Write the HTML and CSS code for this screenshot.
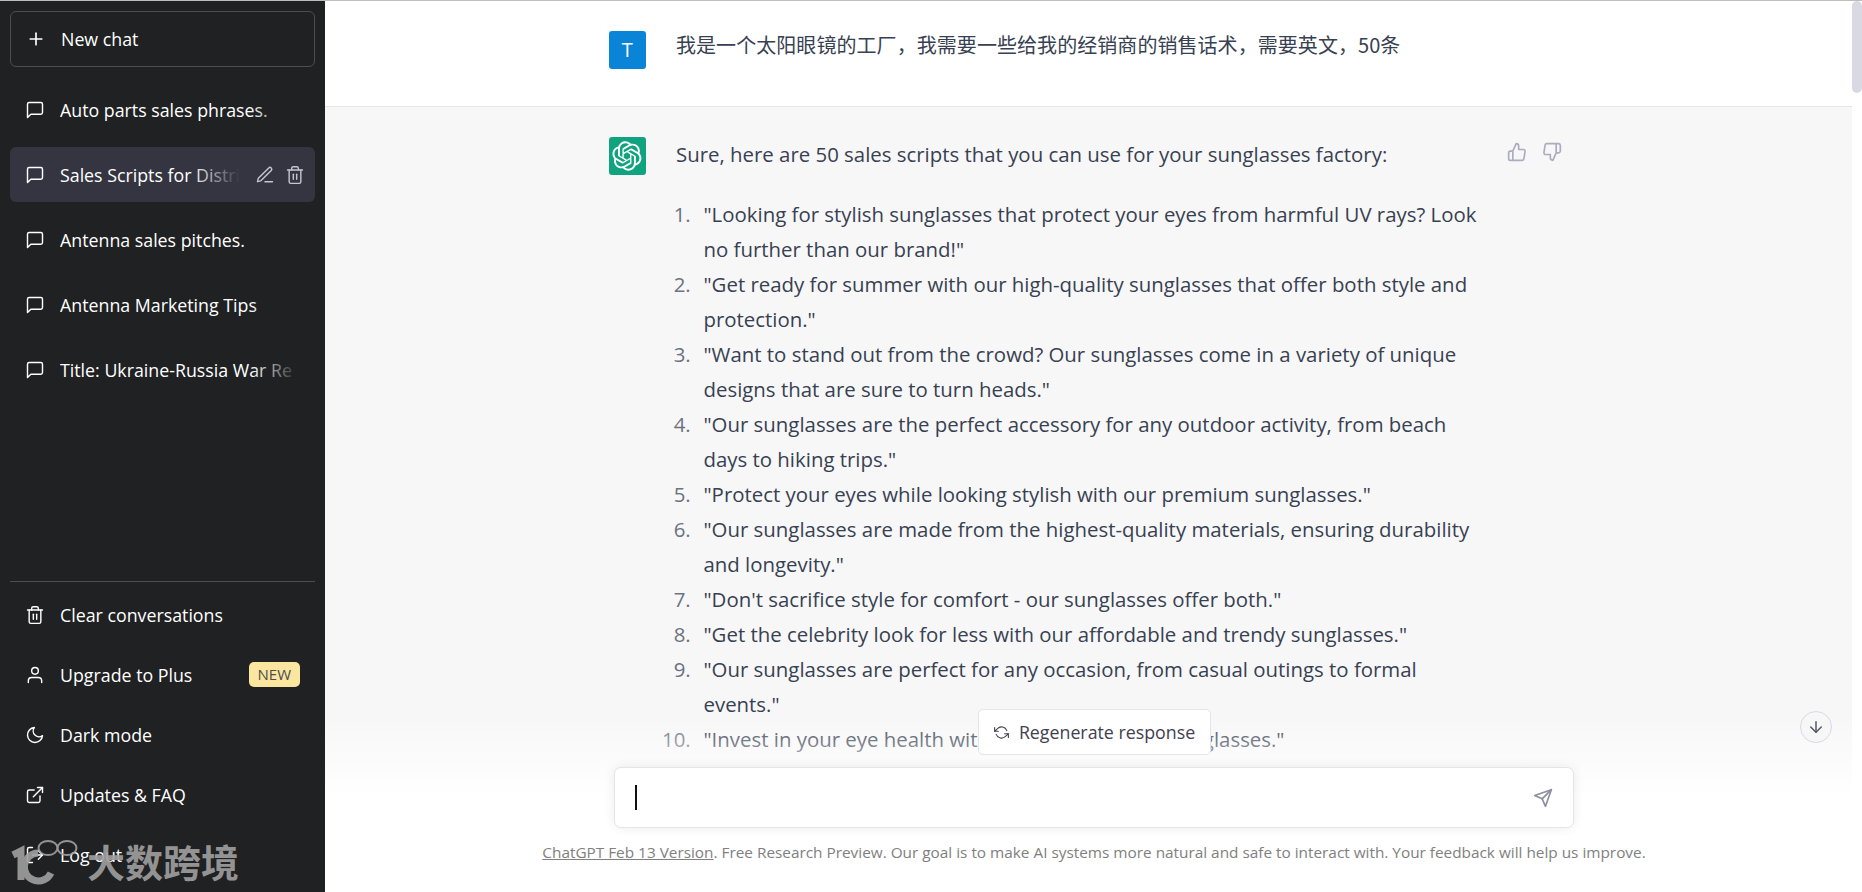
FILE: index.html
```html
<!DOCTYPE html>
<html lang="en">
<head>
    <meta charset="UTF-8">
    <meta name="viewport" content="width=device-width, initial-scale=1.0">
    <title>Sales Scripts for Distributors</title>
    <link rel="stylesheet" href="styles.css">
</head>
<body>
    <svg class="icon-defs" width="0" height="0">
        <symbol id="i-msg" viewBox="0 0 24 24"><path d="M21 15a2 2 0 0 1-2 2H7l-4 4V5a2 2 0 0 1 2-2h14a2 2 0 0 1 2 2z"/></symbol>
        <symbol id="i-trash" viewBox="0 0 24 24"><polyline points="3 6 5 6 21 6"/><path d="M19 6v14a2 2 0 0 1-2 2H7a2 2 0 0 1-2-2V6m3 0V4a2 2 0 0 1 2-2h4a2 2 0 0 1 2 2v2"/><line x1="10" y1="11" x2="10" y2="17"/><line x1="14" y1="11" x2="14" y2="17"/></symbol>
    </svg>

    <div class="app">
        <aside class="sidebar">
            <a class="new-chat">
                <svg class="icon" viewBox="0 0 24 24"><line x1="12" y1="5" x2="12" y2="19"/><line x1="5" y1="12" x2="19" y2="12"/></svg>
                New chat
            </a>
            <div class="history">
                <a class="side-item"><svg class="icon"><use href="#i-msg"/></svg><span class="title">Auto parts sales phrases.</span></a>
                <a class="side-item active">
                    <svg class="icon"><use href="#i-msg"/></svg>
                    <span class="title">Sales Scripts for Distri</span>
                    <span class="row-actions">
                        <svg class="icon" viewBox="0 0 24 24"><path d="M12 20h9"/><path d="M16.5 3.5a2.12 2.12 0 0 1 3 3L7 19l-4 1 1-4L16.5 3.5z"/></svg>
                        <svg class="icon"><use href="#i-trash"/></svg>
                    </span>
                </a>
                <a class="side-item"><svg class="icon"><use href="#i-msg"/></svg><span class="title">Antenna sales pitches.</span></a>
                <a class="side-item"><svg class="icon"><use href="#i-msg"/></svg><span class="title">Antenna Marketing Tips</span></a>
                <a class="side-item"><svg class="icon"><use href="#i-msg"/></svg><span class="title">Title: Ukraine-Russia War Re</span></a>
            </div>
            <div class="side-footer">
                <a class="side-item"><svg class="icon"><use href="#i-trash"/></svg>Clear conversations</a>
                <a class="side-item">
                    <svg class="icon" viewBox="0 0 24 24"><path d="M20 21v-2a4 4 0 0 0-4-4H8a4 4 0 0 0-4 4v2"/><circle cx="12" cy="7" r="4"/></svg>
                    Upgrade to Plus
                    <span class="badge">NEW</span>
                </a>
                <a class="side-item"><svg class="icon" viewBox="0 0 24 24"><path d="M21 12.79A9 9 0 1 1 11.21 3 7 7 0 0 0 21 12.79z"/></svg>Dark mode</a>
                <a class="side-item"><svg class="icon" viewBox="0 0 24 24"><path d="M18 13v6a2 2 0 0 1-2 2H5a2 2 0 0 1-2-2V8a2 2 0 0 1 2-2h6"/><polyline points="15 3 21 3 21 9"/><line x1="10" y1="14" x2="21" y2="3"/></svg>Updates &amp; FAQ</a>
                <a class="side-item"><svg class="icon" viewBox="0 0 24 24"><path d="M9 21H5a2 2 0 0 1-2-2V5a2 2 0 0 1 2-2h4"/><polyline points="16 17 21 12 16 7"/><line x1="21" y1="12" x2="9" y2="12"/></svg>Log out</a>
            </div>
            <div class="watermark">
                <svg class="wm-logo" viewBox="0 0 65 42">
                    <path class="wm-thick" d="M0 15 L8 11 V40"/>
                    <path class="wm-thick" d="M38 33 A14 14 0 1 1 25 13"/>
                    <ellipse class="wm-thin" cx="35" cy="8" rx="9.5" ry="7"/>
                    <ellipse class="wm-thin" cx="54" cy="8" rx="9.5" ry="7"/>
                </svg>
                <span class="wm-text">大数跨境</span>
            </div>
        </aside>

        <main class="main">
            <div class="thread">
                <section class="message user">
                    <div class="message-inner">
                        <div class="avatar avatar-user">T</div>
                        <div class="message-body cjk">我是一个太阳眼镜的工厂，我需要一些给我的经销商的销售话术，需要英文，50条</div>
                    </div>
                </section>
                <section class="message bot">
                    <div class="message-inner">
                        <div class="avatar avatar-bot">
                            <svg viewBox="0 0 41 41" fill="currentColor"><path d="M37.5324 16.8707C37.9808 15.5241 38.1363 14.0974 37.9886 12.6859C37.8409 11.2744 37.3934 9.91076 36.676 8.68622C35.6126 6.83404 33.9882 5.3676 32.0373 4.4985C30.0864 3.62941 27.9098 3.40259 25.8215 3.85078C24.8796 2.7893 23.7219 1.94125 22.4257 1.36341C21.1295 0.785575 19.7249 0.491269 18.3058 0.500197C16.1708 0.495044 14.0893 1.16803 12.3614 2.42214C10.6335 3.67624 9.34853 5.44666 8.6917 7.47815C7.30085 7.76286 5.98686 8.3414 4.8377 9.17505C3.68854 10.0087 2.73073 11.0782 2.02839 12.312C0.956464 14.1591 0.498905 16.2988 0.721698 18.4228C0.944492 20.5467 1.83612 22.5449 3.268 24.1293C2.81966 25.4759 2.66413 26.9026 2.81182 28.3141C2.95951 29.7256 3.40701 31.0892 4.12437 32.3138C5.18791 34.1659 6.8123 35.6322 8.76321 36.5013C10.7141 37.3704 12.8907 37.5973 14.9789 37.1492C15.9208 38.2107 17.0786 39.0587 18.3747 39.6366C19.6709 40.2144 21.0755 40.5087 22.4946 40.4998C24.6307 40.5054 26.7133 39.8321 28.4418 38.5772C30.1704 37.3223 31.4556 35.5506 32.1119 33.5179C33.5027 33.2332 34.8167 32.6547 35.9659 31.821C37.115 30.9874 38.0728 29.9178 38.7752 28.684C39.8458 26.8371 40.3023 24.6979 40.0789 22.5748C39.8556 20.4517 38.9639 18.4544 37.5324 16.8707ZM22.4978 37.8849C20.7443 37.8874 19.0459 37.2733 17.6994 36.1501C17.7601 36.117 17.8666 36.0586 17.936 36.0161L25.9004 31.4156C26.1003 31.3019 26.2663 31.137 26.3813 30.9378C26.4964 30.7386 26.5563 30.5124 26.5549 30.2825V19.0542L29.9213 20.998C29.9389 21.0068 29.9541 21.0198 29.9656 21.0359C29.977 21.052 29.9842 21.0707 29.9867 21.0902V30.3889C29.9842 32.375 29.1946 34.2791 27.7909 35.6841C26.3872 37.0892 24.4838 37.8806 22.4978 37.8849ZM6.39227 31.0064C5.51397 29.4888 5.19742 27.7107 5.49804 25.9832C5.55718 26.0187 5.66048 26.0818 5.73461 26.1244L13.699 30.7248C13.8975 30.8408 14.1233 30.902 14.3532 30.902C14.583 30.902 14.8088 30.8408 15.0073 30.7248L24.731 25.1103V28.9979C24.7321 29.0177 24.7283 29.0376 24.7199 29.0556C24.7115 29.0736 24.6988 29.0893 24.6829 29.1012L16.6317 33.7497C14.9096 34.7416 12.8643 35.0097 10.9447 34.4954C9.02506 33.9811 7.38785 32.7263 6.39227 31.0064ZM4.29707 13.6194C5.17156 12.0998 6.55279 10.9364 8.19885 10.3327C8.19885 10.4013 8.19491 10.5228 8.19491 10.6071V19.808C8.19351 20.0378 8.25334 20.2638 8.36823 20.4629C8.48312 20.6619 8.64893 20.8267 8.84863 20.9404L18.5723 26.5542L15.206 28.4979C15.1894 28.5089 15.1703 28.5155 15.1505 28.5173C15.1307 28.5191 15.1107 28.516 15.0924 28.5082L7.04046 23.8557C5.32135 22.8601 4.06716 21.2235 3.55289 19.3046C3.03862 17.3858 3.30624 15.3413 4.29707 13.6194ZM31.955 20.0556L22.2312 14.4411L25.5976 12.4981C25.6142 12.4872 25.6333 12.4805 25.6531 12.4787C25.6729 12.4769 25.6928 12.4801 25.7111 12.4879L33.7631 17.1364C34.9967 17.849 36.0017 18.8982 36.6606 20.1613C37.3194 21.4244 37.6047 22.849 37.4832 24.2684C37.3617 25.6878 36.8382 27.0432 35.9743 28.1759C35.1103 29.3086 33.9415 30.1717 32.6047 30.6641C32.6047 30.5947 32.6047 30.4733 32.6047 30.3889V21.188C32.6066 20.9586 32.5474 20.7328 32.4332 20.5338C32.319 20.3348 32.154 20.1698 31.955 20.0556ZM35.3055 15.0128C35.2464 14.9765 35.1431 14.9142 35.069 14.8717L27.1045 10.2712C26.906 10.1554 26.6803 10.0943 26.4504 10.0943C26.2206 10.0943 25.9948 10.1554 25.7963 10.2712L16.0726 15.8858V11.9982C16.0715 11.9783 16.0753 11.9585 16.0837 11.9405C16.0921 11.9225 16.1048 11.9068 16.1207 11.8949L24.1719 7.25025C25.4053 6.53903 26.8158 6.19376 28.2383 6.25482C29.6608 6.31589 31.0364 6.78077 32.2044 7.59508C33.3723 8.40939 34.2842 9.53945 34.8334 10.8531C35.3826 12.1667 35.5464 13.6095 35.3055 15.0128ZM14.2424 21.9419L10.8752 19.9981C10.8576 19.9893 10.8423 19.9763 10.8309 19.9602C10.8195 19.9441 10.8122 19.9254 10.8098 19.9058V10.6071C10.8107 9.18295 11.2173 7.78848 11.9819 6.58696C12.7466 5.38544 13.8377 4.42659 15.1275 3.82264C16.4173 3.21869 17.8524 2.99464 19.2649 3.1767C20.6775 3.35876 22.0089 3.93941 23.1034 4.85067C23.0427 4.88379 22.937 4.94215 22.8668 4.98473L14.9024 9.58517C14.7025 9.69878 14.5366 9.86356 14.4215 10.0626C14.3065 10.2616 14.2466 10.4877 14.2479 10.7175L14.2424 21.9419ZM16.071 17.9991L20.4018 15.4978L24.7325 17.9975V22.9985L20.4018 25.4983L16.071 22.9985V17.9991Z"/></svg>
                        </div>
                        <div class="message-body">
                            <p>Sure, here are 50 sales scripts that you can use for your sunglasses factory:</p>
                            <ol class="scripts">
                                <li>"Looking for stylish sunglasses that protect your eyes from harmful UV rays? Look no further than our brand!"</li>
                                <li>"Get ready for summer with our high-quality sunglasses that offer both style and protection."</li>
                                <li>"Want to stand out from the crowd? Our sunglasses come in a variety of unique designs that are sure to turn heads."</li>
                                <li>"Our sunglasses are the perfect accessory for any outdoor activity, from beach days to hiking trips."</li>
                                <li>"Protect your eyes while looking stylish with our premium sunglasses."</li>
                                <li>"Our sunglasses are made from the highest-quality materials, ensuring durability and longevity."</li>
                                <li>"Don't sacrifice style for comfort - our sunglasses offer both."</li>
                                <li>"Get the celebrity look for less with our affordable and trendy sunglasses."</li>
                                <li>"Our sunglasses are perfect for any occasion, from casual outings to formal events."</li>
                                <li>"Invest in your eye health with our UV-protective sunglasses."</li>
                            </ol>
                        </div>
                        <div class="feedback">
                            <svg class="icon" viewBox="0 0 24 24"><path d="M14 9V5a3 3 0 0 0-3-3l-4 9v11h11.28a2 2 0 0 0 2-1.7l1.38-9a2 2 0 0 0-2-2.3zM7 22H4a2 2 0 0 1-2-2v-7a2 2 0 0 1 2-2h3"/></svg>
                            <svg class="icon" viewBox="0 0 24 24"><path d="M10 15v4a3 3 0 0 0 3 3l4-9V2H5.72a2 2 0 0 0-2 1.7l-1.38 9a2 2 0 0 0 2 2.3zm7-13h2.67A2.31 2.31 0 0 1 22 4v7a2.31 2.31 0 0 1-2.33 2H17"/></svg>
                        </div>
                    </div>
                </section>
            </div>

            <div class="scrollbar"><div class="scroll-thumb"></div></div>

            <button class="scroll-down">
                <svg class="icon" viewBox="0 0 24 24"><line x1="12" y1="5" x2="12" y2="19"/><polyline points="19 12 12 19 5 12"/></svg>
            </button>

            <div class="composer">
                <button class="regenerate">
                    <svg class="icon" viewBox="0 0 24 24"><polyline points="1 4 1 10 7 10"/><polyline points="23 20 23 14 17 14"/><path d="M20.49 9A9 9 0 0 0 5.64 5.64L1 10m22 4l-4.64 4.36A9 9 0 0 1 3.51 15"/></svg>
                    Regenerate response
                </button>
                <div class="input-box">
                    <span class="caret"></span>
                    <svg class="icon send" viewBox="0 0 24 24"><line x1="22" y1="2" x2="11" y2="13"/><polygon points="22 2 15 22 11 13 2 9 22 2"/></svg>
                </div>
                <div class="disclaimer"><u>ChatGPT Feb 13 Version</u>. Free Research Preview. Our goal is to make AI systems more natural and safe to interact with. Your feedback will help us improve.</div>
            </div>
        </main>
    </div>
</body>
</html>
```

FILE: styles.css
```css
* {
    box-sizing: border-box;
}

html, body {
    margin: 0;
    height: 100%;
    overflow: hidden;
}

body {
    font-family: "Open Sans", "Noto Sans CJK SC", sans-serif;
    color: #374151;
}

.icon-defs {
    position: absolute;
}

.icon {
    width: 20px;
    height: 20px;
    flex: none;
    fill: none;
    stroke: currentColor;
    stroke-width: 2;
    stroke-linecap: round;
    stroke-linejoin: round;
}

symbol {
    overflow: visible;
}

.app {
    display: flex;
    height: 892px;
    border-top: 1px solid #bdbdbd;
}

/* sidebar */
.sidebar {
    position: relative;
    width: 325px;
    flex: none;
    display: flex;
    flex-direction: column;
    padding: 10px;
    background-color: #202123;
    color: #fff;
    font-size: 17.8px;
}

.new-chat {
    display: flex;
    align-items: center;
    gap: 15px;
    height: 56px;
    padding: 0 15px;
    margin-bottom: 15px;
    border: 1px solid #4d4d4f;
    border-radius: 6px;
}

.history {
    flex: 1;
    display: flex;
    flex-direction: column;
    gap: 10px;
}

.side-item {
    display: flex;
    align-items: center;
    gap: 15px;
    height: 55px;
    padding: 0 15px;
    border-radius: 6px;
    white-space: nowrap;
}

.side-item .icon {
    stroke-width: 1.7;
}

.side-item.active {
    background-color: #343541;
}

.title {
    position: relative;
    flex: 1;
    overflow: hidden;
}

.title::after {
    content: "";
    position: absolute;
    top: 0;
    right: 0;
    bottom: 0;
    width: 50px;
    background: linear-gradient(to left, #202123, rgba(32, 33, 35, 0));
}

.active .title {
    flex: none;
    width: 180px;
}

.active .title::after {
    background: linear-gradient(to left, #343541, rgba(52, 53, 65, 0));
}

.row-actions {
    display: flex;
    flex: none;
    gap: 10px;
    color: #c5c5d2;
}

.side-footer {
    display: flex;
    flex-direction: column;
    gap: 5px;
    padding-top: 5px;
    border-top: 1px solid #4d4d4f;
}

.badge {
    margin-left: auto;
    padding: 0 9px;
    height: 25px;
    line-height: 25px;
    border-radius: 5px;
    background-color: #fae69e;
    color: #4d4d4f;
    font-size: 15px;
}

.watermark {
    position: absolute;
    left: 13px;
    bottom: 10px;
    display: flex;
    align-items: flex-end;
    color: #a0a0a0;
    opacity: 0.9;
}

.wm-logo {
    width: 65px;
    height: 42px;
    overflow: visible;
    fill: none;
    stroke: currentColor;
}

.wm-thick {
    stroke-width: 7;
}

.wm-thin {
    stroke-width: 2;
}

.wm-text {
    margin-left: 9px;
    font-family: "Noto Sans CJK SC", sans-serif;
    font-size: 38px;
    font-weight: 700;
    line-height: 42px;
}

/* chat */
.main {
    position: relative;
    flex: 1;
    overflow: hidden;
    background-color: #fff;
    font-size: 20.4px;
    line-height: 35px;
}

.thread {
    height: 100%;
    margin-right: 10px;
}

.message-inner {
    position: relative;
    display: flex;
    gap: 30px;
    width: 960px;
    margin: 0 auto;
    padding-top: 30px;
}

.user {
    height: 106px;
    border-bottom: 1px solid #e5e5e5;
}

.bot {
    height: 100%;
    background-color: #f7f7f8;
}

.avatar {
    width: 37.5px;
    height: 37.5px;
    flex: none;
    display: flex;
    align-items: center;
    justify-content: center;
    border-radius: 3px;
    color: #fff;
}

.avatar-user {
    background-color: #0a84d6;
    font-size: 20px;
}

.avatar-bot {
    background-color: #10a37f;
}

.avatar-bot svg {
    width: 30px;
    height: 30px;
}

.message-body {
    width: 815px;
}

.cjk {
    font-family: "Noto Sans CJK SC", sans-serif;
    font-size: 20px;
    line-height: 28px;
    letter-spacing: 0.06px;
}

.message-body p {
    margin: 0 0 25px;
}

.scripts {
    margin: 0;
    padding-left: 20px;
}

.scripts li {
    padding-left: 7.5px;
}

.scripts li::marker {
    color: #6b7280;
}

.feedback {
    display: flex;
    gap: 15px;
    margin-left: -14px;
    padding-top: 5px;
    color: #acacbe;
}

/* overlays */
.scrollbar {
    position: absolute;
    top: 0;
    right: 0;
    bottom: 0;
    width: 10px;
    background-color: #fff;
}

.scroll-thumb {
    height: 92px;
    border-radius: 5px;
    background-color: #d9d9e3;
}

.scroll-down {
    position: absolute;
    right: 30px;
    bottom: 149px;
    z-index: 2;
    width: 32px;
    height: 32px;
    display: flex;
    align-items: center;
    justify-content: center;
    padding: 0;
    border: 1px solid #d9d9e3;
    border-radius: 50%;
    background-color: #f7f7f8;
    color: #565869;
}

.scroll-down .icon {
    width: 18px;
    height: 18px;
}

.composer {
    position: absolute;
    left: 0;
    right: 10px;
    bottom: 0;
    height: 176px;
    display: flex;
    flex-direction: column;
    align-items: center;
    background: linear-gradient(180deg, rgba(255, 255, 255, 0), #fff 45%);
}

.regenerate {
    display: flex;
    align-items: center;
    gap: 10px;
    height: 46px;
    padding: 0 15px;
    margin-top: -7px;
    margin-left: 12px;
    border: 1px solid #e5e5e5;
    border-radius: 5px;
    background-color: #fff;
    color: #40414f;
    font: inherit;
    font-size: 17.8px;
    line-height: 25px;
}

.regenerate .icon {
    width: 15px;
    height: 15px;
    stroke-width: 1.7;
}

.input-box {
    display: flex;
    align-items: center;
    justify-content: space-between;
    width: 960px;
    height: 61px;
    margin-top: 12px;
    margin-left: 11px;
    padding: 0 20px;
    border: 1px solid #e5e5e5;
    border-radius: 7px;
    background-color: #fff;
    box-shadow: 0 0 12px rgba(0, 0, 0, 0.08);
}

.caret {
    width: 2px;
    height: 25px;
    background-color: #111;
}

.send {
    color: #8e8ea0;
}

.disclaimer {
    margin-top: 12px;
    margin-left: 11px;
    color: #808080;
    font-size: 15.35px;
    line-height: 25px;
    white-space: nowrap;
}
```
